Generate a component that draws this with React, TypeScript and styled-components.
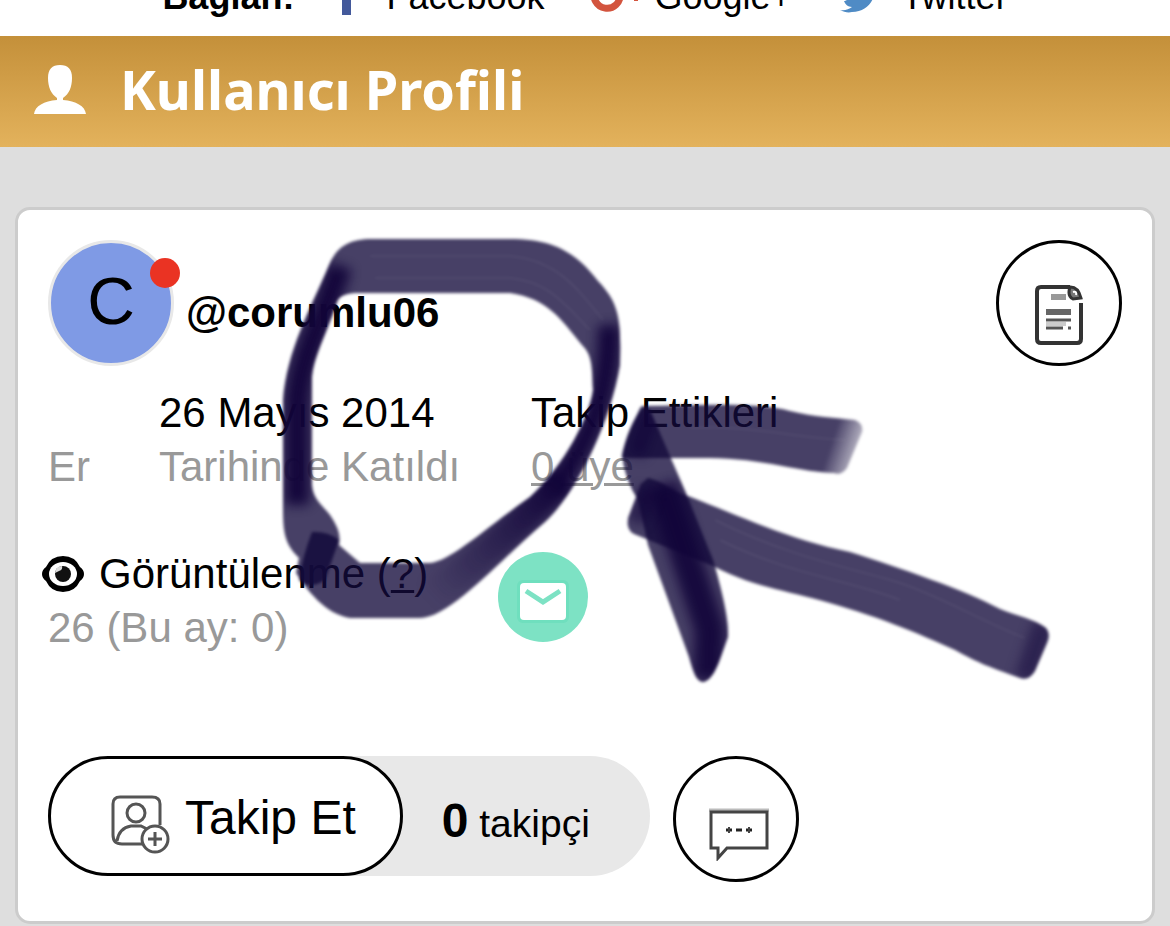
import React from "react";
import styled, { createGlobalStyle } from "styled-components";

const GlobalStyle = createGlobalStyle`
  *, *::before, *::after { box-sizing: border-box; }
  body {
    margin: 0;
    background: #dedede;
    color: #000;
    font-family: "Liberation Sans", Arial, Helvetica, sans-serif;
    font-size: 42px;
    line-height: 54px;
  }
  button { font: inherit; color: inherit; }
  svg { display: block; flex: none; }
`;

const ConnectBar = styled.nav`
  display: flex;
  justify-content: center;
  align-items: flex-end;
  height: 36px;
  padding-bottom: 19px;
  overflow: hidden;
  background: #fff;
  font-size: 36px;
  line-height: 40px;
  white-space: nowrap;
`;

const ConnectLabel = styled.strong`
  margin-right: 26px;
`;

const ConnectLinks = styled.div`
  display: flex;
  gap: 44px;
`;

const ConnectLink = styled.a`
  display: flex;
  align-items: center;
  gap: 14px;
  color: inherit;
  text-decoration: none;
`;

const PageHeader = styled.header`
  display: flex;
  align-items: center;
  gap: 32px;
  height: 111px;
  padding: 0 34px 3px;
  background: linear-gradient(#c4903a, #e3b25c);
  color: #fff;
`;

const PageTitle = styled.h1`
  margin: 0;
  padding-bottom: 2px;
  font-family: "Noto Sans", "Open Sans", sans-serif;
  font-size: 54px;
  font-weight: 700;
  line-height: 72px;
`;

const Card = styled.main`
  position: relative;
  margin: 60px 15px 0;
  padding: 30px 30px 39px;
  background: #fff;
  border: 3px solid #ccc;
  border-radius: 15px;
`;

const Identity = styled.section`
  display: flex;
  align-items: center;
  gap: 12px;
`;

const Avatar = styled.div`
  position: relative;
  display: flex;
  align-items: center;
  justify-content: center;
  width: 126px;
  height: 126px;
  padding-bottom: 4px;
  border: 3px solid #e8e8e8;
  border-radius: 50%;
  background: #7f9ae5;
  font-size: 66px;
`;

const StatusDot = styled.span`
  position: absolute;
  top: 15px;
  right: -9px;
  width: 30px;
  height: 30px;
  border-radius: 50%;
  background: #ea3323;
`;

const UserName = styled.h2`
  flex: 1;
  margin: 0;
  padding-top: 20px;
  font-size: 42px;
`;

const RoundButton = styled.button`
  display: flex;
  align-items: flex-end;
  justify-content: center;
  width: 126px;
  height: 126px;
  padding: 0 0 18px;
  border: 3px solid #000;
  border-radius: 50%;
  background: #fff;
`;

const Facts = styled.section`
  display: grid;
  grid-template-columns: 111px 372px 1fr;
  align-items: end;
  margin-top: 20px;
  white-space: nowrap;
`;

const Muted = styled.div`
  color: #999;
`;

const MutedLink = styled.a`
  color: inherit;
  text-decoration: underline;
  text-decoration-thickness: 3px;
`;

const Views = styled.section`
  display: grid;
  grid-template-columns: 450px 1fr;
  margin-top: 53px;
  white-space: nowrap;
`;

const ViewsTitle = styled.div`
  display: flex;
  align-items: center;
  gap: 15px;
  margin-left: -6px;
`;

const HelpLink = styled.a`
  color: inherit;
  text-decoration-thickness: 3px;
`;

const MailLink = styled.a`
  justify-self: start;
  margin-top: 5px;
`;

const Actions = styled.section`
  display: flex;
  align-items: flex-start;
  gap: 23px;
  margin-top: 101px;
`;

const FollowGroup = styled.div`
  display: flex;
  border-radius: 60px;
  background: #e8e8e8;
`;

const FollowButton = styled.button`
  display: flex;
  align-items: center;
  gap: 14px;
  height: 120px;
  padding: 3px 44px 0 60px;
  border: 3px solid #000;
  border-radius: 60px;
  background: #fff;
  font-size: 48px;
  white-space: nowrap;

  svg { margin-top: 15px; }
`;

const Followers = styled.div`
  padding: 38px 60px 0 39px;
  font-size: 39px;
  white-space: nowrap;

  strong { font-size: 48px; }
`;

const Scribble = styled.svg`
  position: absolute;
  top: 15px;
  left: 250px;
  pointer-events: none;
`;

const FacebookIcon = () => (
  <svg width="52" height="40" viewBox="0 0 52 40" aria-hidden="true">
    <path fill="#43599b" d="M22 38V20h-6v-8h6V7c0-6 4-9 9-9h6v8h-4c-2 0-2 1-2 3v3h7l-1 8h-6v18z" />
  </svg>
);

const GoogleIcon = () => (
  <svg width="52" height="40" viewBox="0 0 52 40" aria-hidden="true">
    <path fill="none" stroke="#d3543e" strokeWidth="7" d="M26 8A13 13 0 1 0 31 17H18" />
    <path fill="#d3543e" d="M45 10h4v5h4v4h-4v5h-4v-5h-4v-4h4z" />
  </svg>
);

const TwitterIcon = () => (
  <svg width="52" height="40" viewBox="0 0 52 40" aria-hidden="true">
    <path
      fill="#4f8bc5"
      d="M43 8c-2 1-3 1-5 1 2-1 3-2 4-4-2 1-3 2-5 2a8 8 0 0 0-14 7C16 14 10 11 6 6c-2 4-1 8 2 11-1 0-2 0-3-1 0 4 3 7 6 8-1 0-2 0-3 0 1 3 4 6 8 6-3 2-7 4-12 3 4 2 8 3 12 2 15 0 23-12 23-23 2-1 3-2 4-4z"
    />
  </svg>
);

const PersonIcon = () => (
  <svg width="54" height="50" viewBox="0 0 54 50" aria-hidden="true">
    <path
      fill="#fff"
      d="M26 0c8 0 12 4 12 13 0 9-3 16-9 20v2c13 1 22 6 23 14H0c1-8 10-13 23-14v-2c-6-4-9-11-9-20C14 4 18 0 26 0z"
    />
  </svg>
);

const NoteIcon = () => (
  <svg width="48" height="60" viewBox="0 0 48 60" fill="none" aria-hidden="true">
    <path d="M35 2H6Q2 2 2 6v48q0 4 4 4h36q4 0 4-4V18" stroke="#333" strokeWidth="4" />
    <path d="M34 2q9-1 12 11l-8 1q-6-3-3-12" fill="#777" stroke="#333" strokeWidth="3" />
    <path d="M38 7q4-1 3 3" stroke="#fff" strokeWidth="2" />
    <path d="M16 12h15" stroke="#999" strokeWidth="6" />
    <path d="M11 27h25" stroke="#666" strokeWidth="6" />
    <path d="M11 35h25" stroke="#555" strokeWidth="3" />
    <path d="M11 39h20" stroke="#ccc" strokeWidth="4" />
    <path d="M11 43h17M33 43h3" stroke="#555" strokeWidth="3" />
  </svg>
);

const EyeIcon = () => (
  <svg width="42" height="36" viewBox="0 0 42 36" aria-hidden="true">
    <path d="M0 18Q0 14 4 11 9 0 21 0t17 11q4 3 4 7t-4 7q-5 11-17 11T4 25q-4-3-4-7z" />
    <ellipse cx="21" cy="18" rx="14" ry="12" fill="#fff" />
    <circle cx="21" cy="18" r="8" fill="#111" />
    <path d="M13 17q1-7 7-7 1 4-3 5z" fill="#ddd" />
  </svg>
);

const MailIcon = () => (
  <svg width="90" height="90" viewBox="0 0 90 90" aria-hidden="true">
    <circle cx="45" cy="45" r="45" fill="#7de2c4" />
    <rect x="19" y="28" width="52" height="43" rx="6" fill="#62dcb8" opacity=".5" />
    <rect x="22" y="31" width="46" height="37" rx="4" fill="#fff" />
    <path d="M28 39l17 11 17-11" fill="none" stroke="#7de2c4" strokeWidth="5" />
  </svg>
);

const AddPersonIcon = () => (
  <svg width="60" height="60" viewBox="0 0 60 60" fill="none" stroke="#555" aria-hidden="true">
    <path d="M49 30V9q0-7-8-7H9Q2 2 2 9v31q0 9 9 9h20" strokeWidth="3" />
    <circle cx="25" cy="18" r="9" strokeWidth="3" />
    <path d="M6 46q2-13 14-15h10l6 3" strokeWidth="3" />
    <circle cx="44" cy="44" r="13" fill="#fff" strokeWidth="3" />
    <path d="M44 37v14M37 44h14" strokeWidth="3" />
  </svg>
);

const ChatIcon = () => (
  <svg width="66" height="54" viewBox="-6 0 66 54" fill="none" aria-hidden="true">
    <path d="M0 3h60" stroke="#bbb" strokeWidth="3" />
    <path d="M2 5h56v36H18L9 51V41H2z" stroke="#444" strokeWidth="3" />
    <path d="M17 23h6M27 23h6M37 23h6" stroke="#222" strokeWidth="3" />
    <path d="M20 20v6M40 20v6" stroke="#444" strokeWidth="2" />
  </svg>
);

const LOOP =
  "M372 239H515C560 240 580 258 598 281C620 304 621 320 620 365C610 425 575 495 545 522C500 560 450 618 420 618H350C325 614 307 590 296 573L299 558C286 545 283 535 283 510V400C287 350 310 310 329 265C337 246 350 239 372 239ZM355 293C342 294 338 297 336 305C326 335 312 360 312 380V485C313 499 322 505 330 515C338 527 341 535 339 545L360 563H430C450 562 490 525 530 497C565 465 590 415 593 390C592 365 592 355 582 345C560 318 548 299 510 293Z";

const ARROW_SHAFT =
  "M648 478C665 482 670 490 688 496C740 516 790 540 850 552C900 568 965 590 1000 609C1017 616 1035 619 1046 628Q1051 634 1047 643L1035 671Q1029 681 1020 678C990 667 980 664 955 650C900 625 870 615 840 606C790 590 760 590 713 566L634 534Q626 530 628 518L641 484Z";

const ARROW_DOWN =
  "M650 410L686 493L713 560C725 600 729 625 728 637C721 655 716 678 704 682C697 682 694 675 689 657L648 545L638 500Q625 480 622 456Q628 425 643 407Z";

const ARROW_TOP =
  "M642 406C700 405 760 402 790 411C815 417 835 418 855 420Q864 424 862 432L847 468Q841 476 834 473C805 473 760 458 710 458H622Q621 449 640 408Z";

const MarkerDrawing = () => (
  <Scribble width="800" height="470" viewBox="268 225 800 470" aria-hidden="true">
    <defs>
      <filter id="edge" colorInterpolationFilters="sRGB" x="-5%" y="-5%" width="110%" height="110%">
        <feGaussianBlur stdDeviation="1.7" />
      </filter>
      <filter
        id="soft"
        colorInterpolationFilters="sRGB"
        filterUnits="userSpaceOnUse"
        x="268"
        y="225"
        width="800"
        height="470"
      >
        <feGaussianBlur stdDeviation="6" />
      </filter>
      <linearGradient id="tip" gradientUnits="userSpaceOnUse" x1="832" y1="440" x2="862" y2="450">
        <stop offset="0" stopColor="#130a3b" />
        <stop offset="1" stopColor="#130a3b" stopOpacity=".3" />
      </linearGradient>
      <linearGradient id="fade" gradientUnits="userSpaceOnUse" x1="560" y1="480" x2="430" y2="597">
        <stop offset="0" stopColor="#12053a" />
        <stop offset="1" stopColor="#12053a" stopOpacity="0" />
      </linearGradient>
      <clipPath id="loopShape">
        <path clipRule="evenodd" d={LOOP} />
      </clipPath>
      <clipPath id="arrowShape">
        <path d={ARROW_SHAFT} />
        <path d={ARROW_DOWN} />
      </clipPath>
    </defs>

    <g filter="url(#edge)" fill="#130a3b">
      <path fillRule="evenodd" opacity=".78" d={LOOP} />
      <path opacity=".85" d="M312 532Q328 531 339 540L325 580Q310 590 299 580Q303 555 312 532Z" />
      <g clipPath="url(#loopShape)" fill="none" stroke="#12053a">
        <path filter="url(#soft)" opacity=".95" strokeWidth="24" d="M340 266C325 315 298 360 297 405V505" />
        <path filter="url(#soft)" opacity=".95" strokeWidth="22" d="M609 325C610 405 580 455 553 489" />
        <path filter="url(#soft)" stroke="url(#fade)" strokeWidth="32" d="M563 478C525 520 480 560 430 597" />
      </g>
    </g>

    <g filter="url(#edge)" fill="#130a3b">
      <path fill="url(#tip)" opacity=".78" d={ARROW_TOP} />
      <path opacity=".78" d={ARROW_DOWN} />
      <path opacity=".78" d={ARROW_SHAFT} />
      <g clipPath="url(#arrowShape)" fill="none" stroke="#12053a">
        <path filter="url(#soft)" opacity=".9" strokeWidth="30" d="M662 485L710 630L708 680" />
        <path filter="url(#soft)" opacity=".6" strokeWidth="18" d="M652 410L636 455M648 490L636 522" />
        <path filter="url(#soft)" opacity=".5" strokeWidth="22" d="M1045 622L1025 680" />
      </g>
    </g>
    <g fill="none" stroke="#fff" strokeWidth="2" opacity=".05" filter="url(#edge)">
      <path d="M370 256H510C555 260 575 285 603 320M375 278H510C550 282 565 305 590 330" />
      <path d="M690 428C750 425 790 437 845 440M715 520C790 558 860 570 900 583S990 625 1025 638M720 540C790 575 850 580 900 600" />
    </g>
  </Scribble>
);

export default function App() {
  return (
    <>
      <GlobalStyle />
      <ConnectBar>
        <ConnectLabel>Bağlan:</ConnectLabel>
        <ConnectLinks>
          <ConnectLink href="#facebook"><FacebookIcon />Facebook</ConnectLink>
          <ConnectLink href="#google"><GoogleIcon />Google+</ConnectLink>
          <ConnectLink href="#twitter"><TwitterIcon />Twitter</ConnectLink>
        </ConnectLinks>
      </ConnectBar>

      <PageHeader>
        <PersonIcon />
        <PageTitle>Kullanıcı Profili</PageTitle>
      </PageHeader>

      <Card>
        <Identity>
          <Avatar>C<StatusDot /></Avatar>
          <UserName>@corumlu06</UserName>
          <RoundButton type="button" aria-label="Notlar"><NoteIcon /></RoundButton>
        </Identity>

        <Facts>
          <Muted>Er</Muted>
          <div>
            <div>26 Mayıs 2014</div>
            <Muted>Tarihinde Katıldı</Muted>
          </div>
          <div>
            <div>Takip Ettikleri</div>
            <Muted><MutedLink href="#takip">0 üye</MutedLink></Muted>
          </div>
        </Facts>

        <Views>
          <div>
            <ViewsTitle>
              <EyeIcon />
              <span>Görüntülenme (<HelpLink href="#yardim">?</HelpLink>)</span>
            </ViewsTitle>
            <Muted>26 (Bu ay: 0)</Muted>
          </div>
          <MailLink href="#mesaj" aria-label="E-posta"><MailIcon /></MailLink>
        </Views>

        <Actions>
          <FollowGroup>
            <FollowButton type="button"><AddPersonIcon />Takip Et</FollowButton>
            <Followers><strong>0</strong> takipçi</Followers>
          </FollowGroup>
          <RoundButton type="button" aria-label="Mesaj gönder"><ChatIcon /></RoundButton>
        </Actions>

        <MarkerDrawing />
      </Card>
    </>
  );
}
